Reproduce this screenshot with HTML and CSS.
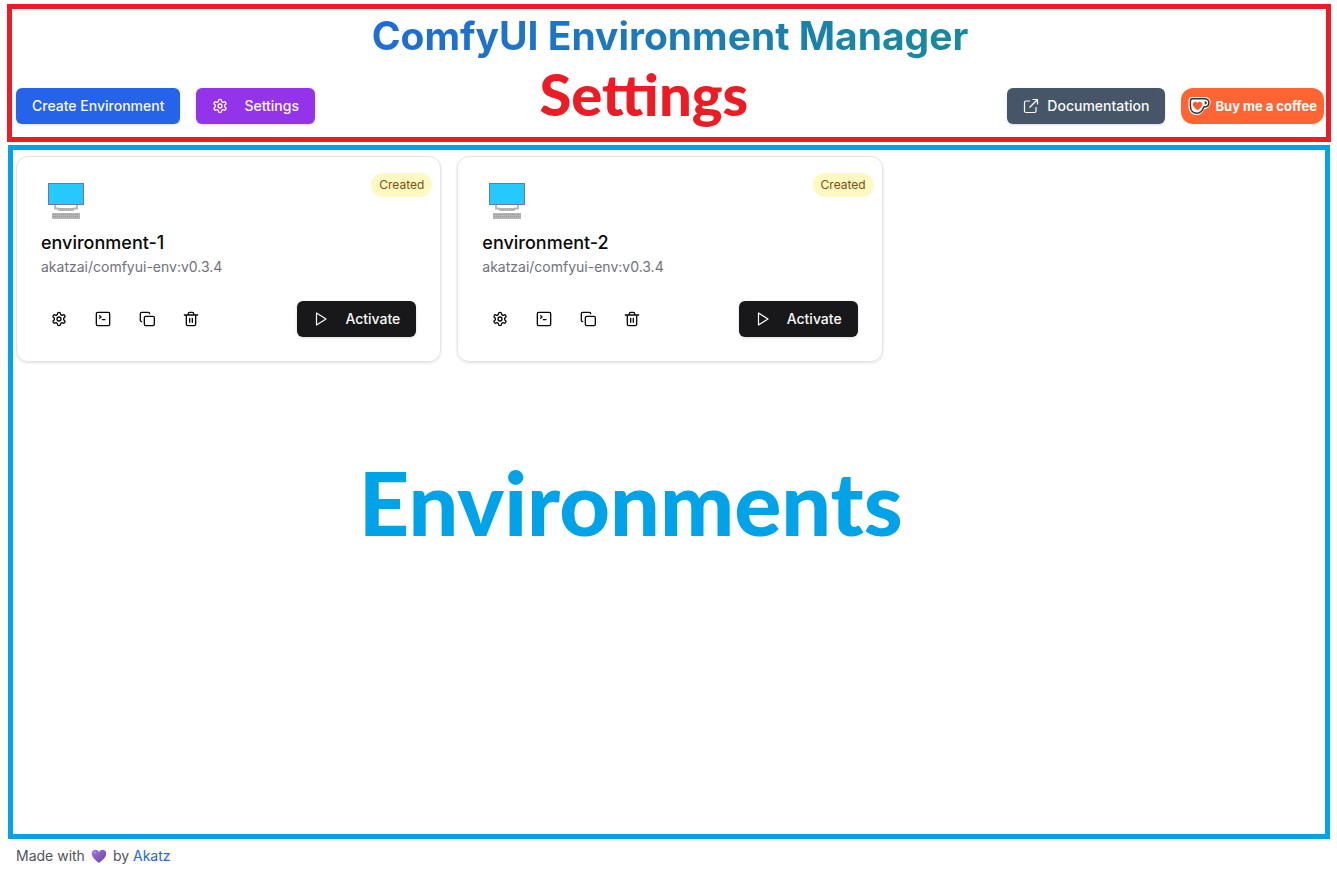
FILE: index.html
```html
<!DOCTYPE html>
<html lang="en">
<head>
<meta charset="utf-8">
<meta name="viewport" content="width=device-width, initial-scale=1">
<title>ComfyUI Environment Manager</title>
<link rel="stylesheet" href="styles.css">
</head>
<body>
<svg class="sprite" aria-hidden="true">
  <symbol id="settings" viewBox="0 0 24 24"><g fill="none" stroke="currentColor" stroke-width="2" stroke-linecap="round" stroke-linejoin="round"><path d="M12.22 2h-.44a2 2 0 0 0-2 2v.18a2 2 0 0 1-1 1.73l-.43.25a2 2 0 0 1-2 0l-.15-.08a2 2 0 0 0-2.73.73l-.22.38a2 2 0 0 0 .73 2.73l.15.1a2 2 0 0 1 1 1.72v.51a2 2 0 0 1-1 1.74l-.15.09a2 2 0 0 0-.73 2.73l.22.38a2 2 0 0 0 2.73.73l.15-.08a2 2 0 0 1 2 0l.43.25a2 2 0 0 1 1 1.73V20a2 2 0 0 0 2 2h.44a2 2 0 0 0 2-2v-.18a2 2 0 0 1 1-1.73l.43-.25a2 2 0 0 1 2 0l.15.08a2 2 0 0 0 2.73-.73l.22-.39a2 2 0 0 0-.73-2.73l-.15-.08a2 2 0 0 1-1-1.74v-.5a2 2 0 0 1 1-1.74l.15-.09a2 2 0 0 0 .73-2.73l-.22-.38a2 2 0 0 0-2.73-.73l-.15.08a2 2 0 0 1-2 0l-.43-.25a2 2 0 0 1-1-1.73V4a2 2 0 0 0-2-2z"/><circle cx="12" cy="12" r="3"/></g></symbol>
  <symbol id="terminal" viewBox="0 0 24 24"><g fill="none" stroke="currentColor" stroke-width="2" stroke-linecap="round" stroke-linejoin="round"><path d="m7 11 2-2-2-2M11 13h4"/><rect x="2" y="2" width="20" height="20" rx="2"/></g></symbol>
  <symbol id="copy" viewBox="0 0 24 24"><g fill="none" stroke="currentColor" stroke-width="2" stroke-linecap="round" stroke-linejoin="round"><rect x="8" y="8" width="15" height="14" rx="2"/><path d="M4 16c-1.100 0-2-.9-2-2V4c0-1.100.9-2 2-2h10c1.100 0 2 .9 2 2"/></g></symbol>
  <symbol id="trash" viewBox="0 0 24 24"><g fill="none" stroke="currentColor" stroke-width="2" stroke-linecap="round" stroke-linejoin="round"><path d="M2 6h20M19 6v14a2 2 0 0 1-2 2H7a2 2 0 0 1-2-2V6M8 6V4a2 2 0 0 1 2-2h4a2 2 0 0 1 2 2v2M10 11v6M14 11v6"/></g></symbol>
  <symbol id="play" viewBox="0 0 16 16"><path d="M3.500 2v12l9.500-6z" fill="none" stroke="currentColor" stroke-width="1.200" stroke-linejoin="round"/></symbol>
  <symbol id="external" viewBox="0 0 16 16"><path d="M7 3H3a1.500 1.500 0 0 0-1.500 1.500v8.500A1.500 1.500 0 0 0 3 14.500h8.500A1.500 1.500 0 0 0 13 13V9M9.500 1.500h5v5M14.500 1.500 6.500 9.500" fill="none" stroke="currentColor" stroke-width="1.200" stroke-linejoin="round"/></symbol>
  <symbol id="computer" viewBox="0 0 36 36"><rect x=".5" y=".5" width="35" height="21" fill="#26c9fc" stroke="#6d72bd"/><path d="M7 22v3.500h3l2 1.500h12l2-1.500h3V22" fill="none" stroke="#b4b4b4" stroke-width="1.800"/><path d="M8 25h20l-3 3H11z" fill="#b4b4b4"/><path d="M4 30h28v6H4z" fill="#b4b4b4"/><path d="M5 31.500h26M5 33.500h26" stroke="#999" stroke-dasharray="1 1"/></symbol>
</svg>

<header class="frame settings-frame">
  <h1 class="title"><span class="title-text">ComfyUI Environment Manager</span></h1>
  <div class="toolbar">
    <div class="group">
      <button class="btn blue" type="button">Create Environment</button>
      <button class="btn purple wide-gap" type="button"><svg class="icon"><use href="#settings"/></svg>Settings</button>
    </div>
    <div class="group">
      <a class="btn slate" href="#docs"><svg class="icon"><use href="#external"/></svg>Documentation</a>
      <a class="coffee" href="#coffee">
        <svg class="cup" viewBox="0 0 24 20" aria-hidden="true"><path d="M4 .5h13c4 0 6.500 2 6.500 5.500S20.500 13 17 13.500c-2 4-4 6-8 6-5 0-8.500-4-8.500-9V5c0-2.500 1-4.500 3.500-4.500z" fill="#fff"/><path d="M4.500 2.500h12.500c3 0 4.800 1.500 4.800 4 0 2.600-2 4.500-5.300 4.500-1.500 4.500-3.500 6.500-7 6.500-4.500 0-7-3-7-7.500V5c0-1.600.6-2.500 2-2.500z" fill="#fff" stroke="#323842" stroke-width="1.600"/><path d="M17.500 5v3.500c1.500 0 2.200-.7 2.200-1.800S19 5 17.500 5z" fill="#323842"/><path d="M10 14.500C7 12.300 5 10.700 5 8.300c0-3.200 3.600-3.800 5-1.300 1.400-2.500 5-1.900 5 1.300 0 2.400-2 4-5 6.200z" fill="#ff5a2c"/></svg>
        Buy me a coffee
      </a>
    </div>
    <p class="note red-note">Settings</p>
  </div>
</header>

<main class="frame env-frame">
  <div class="cards">
    <article class="card">
      <span class="badge">Created</span>
      <svg class="computer" aria-hidden="true"><use href="#computer"/></svg>
      <h2 class="name">environment-1</h2>
      <p class="image">akatzai/comfyui-env:v0.3.4</p>
      <div class="actions">
        <div class="tools">
          <button class="tool" type="button" aria-label="Settings"><svg class="icon"><use href="#settings"/></svg></button>
          <button class="tool" type="button" aria-label="Terminal"><svg class="icon"><use href="#terminal"/></svg></button>
          <button class="tool" type="button" aria-label="Duplicate"><svg class="icon"><use href="#copy"/></svg></button>
          <button class="tool" type="button" aria-label="Delete"><svg class="icon"><use href="#trash"/></svg></button>
        </div>
        <button class="btn black wide-gap" type="button"><svg class="icon"><use href="#play"/></svg>Activate</button>
      </div>
    </article>
    <article class="card">
      <span class="badge">Created</span>
      <svg class="computer" aria-hidden="true"><use href="#computer"/></svg>
      <h2 class="name">environment-2</h2>
      <p class="image">akatzai/comfyui-env:v0.3.4</p>
      <div class="actions">
        <div class="tools">
          <button class="tool" type="button" aria-label="Settings"><svg class="icon"><use href="#settings"/></svg></button>
          <button class="tool" type="button" aria-label="Terminal"><svg class="icon"><use href="#terminal"/></svg></button>
          <button class="tool" type="button" aria-label="Duplicate"><svg class="icon"><use href="#copy"/></svg></button>
          <button class="tool" type="button" aria-label="Delete"><svg class="icon"><use href="#trash"/></svg></button>
        </div>
        <button class="btn black wide-gap" type="button"><svg class="icon"><use href="#play"/></svg>Activate</button>
      </div>
    </article>
  </div>
  <p class="note blue-note">Environments</p>
</main>

<footer class="footer">
  <span>Made with</span>
  <svg class="heart" viewBox="0 0 16 16" role="img" aria-label="love"><defs><linearGradient id="hg" x1="0" y1="0" x2="1" y2="1"><stop offset="0" stop-color="#a274dc"/><stop offset="1" stop-color="#6b42a6"/></linearGradient></defs><path d="M8 15C4 12 .8 9 .8 5.500.8 1.500 6 .5 8 4c2-3.500 7.200-2.500 7.200 1.500C15.200 9 12 12 8 15z" fill="url(#hg)"/><ellipse cx="4" cy="4.500" rx="1.500" ry="1" fill="#b991ea" transform="rotate(-35 4 4.500)"/></svg>
  <span>by <a class="link" href="#akatz">Akatz</a></span>
</footer>
</body>
</html>
```

FILE: styles.css
```css
* { box-sizing: border-box; }

body {
  margin: 0;
  min-height: 100vh;
  padding: 4px 6px 0 7px;
  display: flex;
  flex-direction: column;
  background: #fff;
  color: #09090b;
  font-family: Inter, "Liberation Sans", sans-serif;
  font-size: 14px;
  line-height: 20px;
}

h1, h2, p { margin: 0; }

.sprite { position: absolute; width: 0; height: 0; }

.frame { border: 5px solid; }

.settings-frame {
  border-color: #ed1c24;
  padding: 7px 2px 13px 4px;
}

.title {
  display: flex;
  justify-content: center;
  margin-bottom: 32px;
  font-size: 39px;
  font-weight: 700;
  line-height: 40px;
}

.title-text {
  padding-bottom: 4px;
  margin-bottom: -4px;
  background: linear-gradient(to right, #1f6cd6, #178a9c);
  -webkit-background-clip: text;
  background-clip: text;
  color: transparent;
  white-space: nowrap;
}

.toolbar {
  position: relative;
  display: flex;
  justify-content: space-between;
}

.group { display: flex; gap: 16px; }

.btn {
  display: inline-flex;
  align-items: center;
  justify-content: center;
  gap: 8px;
  height: 36px;
  padding: 0 16px;
  border: 0;
  border-radius: 6px;
  color: #fafafa;
  font: 500 14px/20px Inter, "Liberation Sans", sans-serif;
  text-decoration: none;
  white-space: nowrap;
  box-shadow: 0 1px 3px rgba(0, 0, 0, .15);
}

.wide-gap { gap: 16px; }
.blue { background: #2563eb; }
.purple { background: #9333ea; }
.slate { background: #475569; }
.black { background: #18181b; }

.icon { width: 16px; height: 16px; }

.coffee {
  display: flex;
  align-items: center;
  gap: 4px;
  height: 36px;
  padding: 0 7px;
  border-radius: 12px;
  background: #ff6433;
  color: #fff;
  font-size: 13px;
  font-weight: 700;
  text-decoration: none;
  white-space: nowrap;
}

.cup { width: 23px; height: 20px; }

.note {
  font-family: Lato, "Liberation Sans", sans-serif;
  font-weight: 900;
}

.red-note {
  position: absolute;
  left: 48%;
  bottom: 0;
  transform: translateX(-50%);
  color: #ed1c24;
  font-size: 58px;
  line-height: 60px;
}

.env-frame {
  flex: 1;
  margin: 3px 1px 0;
  padding: 6px 1px 6px 3px;
  border-color: #00a2e8;
}

.cards {
  display: grid;
  grid-template-columns: repeat(3, 1fr);
  gap: 16px;
}

.card {
  position: relative;
  padding: 24px;
  border: 1px solid #e4e4e7;
  border-radius: 12px;
  box-shadow: 0 1px 3px rgba(0, 0, 0, .12);
}

.badge {
  position: absolute;
  top: 16px;
  right: 8px;
  padding: 4px 8px;
  border-radius: 12px;
  background: #fef9c3;
  color: #854d0e;
  font-size: 12px;
  line-height: 16px;
}

.computer {
  display: block;
  width: 36px;
  height: 36px;
  margin: 2px 7px 10px;
}

.name {
  font-size: 18px;
  font-weight: 500;
  line-height: 28px;
}

.image { color: #71717a; }

.actions {
  display: flex;
  justify-content: space-between;
  margin-top: 24px;
}

.tools { display: flex; gap: 8px; }

.tool {
  display: grid;
  place-items: center;
  width: 36px;
  height: 36px;
  padding: 0;
  border: 0;
  background: none;
  color: #09090b;
}

.blue-note {
  width: 94%;
  margin-top: 90px;
  color: #00a2e8;
  font-size: 88px;
  line-height: 100px;
  text-align: center;
}

.footer {
  display: flex;
  align-items: center;
  gap: 6px;
  padding: 7px 9px 11px;
  color: #52525b;
}

.heart { width: 16px; height: 16px; }

.link { color: #2563eb; text-decoration: none; }
```
